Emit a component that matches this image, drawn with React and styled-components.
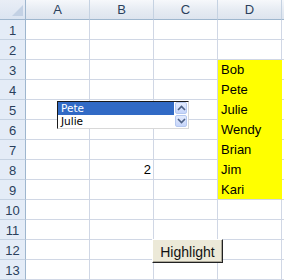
import React from 'react';
import styled, { createGlobalStyle } from 'styled-components';

const GlobalStyle = createGlobalStyle`
  html, body {
    margin: 0;
    padding: 0;
    background: #ffffff;
  }
  * {
    box-sizing: border-box;
  }
`;

const Sheet = styled.div`
  position: relative;
  width: 284px;
  height: 280px;
  overflow: hidden;
  background: #ffffff;
  font-family: "Liberation Sans", Arial, sans-serif;
`;

const Grid = styled.div`
  display: grid;
  grid-template-columns: 26px repeat(4, 64px) 1fr;
  grid-auto-rows: 20px;
`;

const Corner = styled.div`
  position: relative;
  background: linear-gradient(#e9eef6, #dbe4f1);
  border-right: 1px solid #9eb6ce;
  border-bottom: 1px solid #9eb6ce;

  &::after {
    content: '';
    position: absolute;
    right: 2px;
    bottom: 3px;
    width: 0;
    height: 0;
    border-left: 11px solid transparent;
    border-bottom: 11px solid #c3d1e4;
  }
`;

const ColHead = styled.div`
  display: flex;
  align-items: center;
  justify-content: center;
  background: linear-gradient(#f6f8fb 0%, #e7ecf3 50%, #dde4ee 100%);
  border-right: 1px solid #c5d2e2;
  border-bottom: 1px solid #9eb6ce;
  color: #2a3f5c;
  font-size: 13px;
`;

const RowHead = styled.div`
  display: flex;
  align-items: center;
  justify-content: center;
  background: #e4ecf7;
  border-right: 1px solid #9eb6ce;
  border-bottom: 1px solid #c5d2e2;
  color: #2a3f5c;
  font-size: 13px;
  padding-top: 1px;
`;

const Cell = styled.div`
  display: flex;
  align-items: flex-end;
  justify-content: ${(p) => (p.$num ? 'flex-end' : 'flex-start')};
  padding: 0 2px 2px 3px;
  background: ${(p) => (p.$fill ? '#ffff00' : '#ffffff')};
  border-right: 1px solid ${(p) => (p.$fill ? '#ffff00' : '#d0d7e5')};
  border-bottom: 1px solid ${(p) => (p.$fill && p.$fillBelow ? '#ffff00' : '#d0d7e5')};
  color: #000000;
  font-size: 13px;
  line-height: 15px;
`;

const ListBox = styled.div`
  position: absolute;
  left: 57px;
  top: 101px;
  width: 132px;
  height: 28px;
  display: flex;
  background: #ffffff;
  border-top: 1px solid #1a1a1a;
  border-left: 1px solid #1a1a1a;
  border-right: 1px solid #d8d8d8;
  border-bottom: 1px solid #d8d8d8;
`;

const Items = styled.div`
  flex: 1;
  display: flex;
  flex-direction: column;
`;

const Item = styled.div`
  height: 13px;
  padding-left: 3px;
  font-family: "DejaVu Sans", Tahoma, sans-serif;
  font-size: 10.5px;
  line-height: 13px;
  background: ${(p) => (p.$selected ? '#316ac5' : 'transparent')};
  color: ${(p) => (p.$selected ? '#ffffff' : '#000000')};
`;

const Scroll = styled.div`
  width: 14px;
  display: flex;
  flex-direction: column;
  gap: 1px;
  padding: 0 1px 0 1px;
  background: #ffffff;
`;

const ArrowBtn = styled.div`
  height: 12px;
  display: flex;
  align-items: center;
  justify-content: center;
  border: 1px solid #b5c8f0;
  border-radius: 2px;
  background: linear-gradient(#e3ebfd, #c6d5fa);
`;

const Button = styled.div`
  position: absolute;
  left: 152px;
  top: 239px;
  width: 71px;
  height: 24px;
  display: flex;
  align-items: center;
  justify-content: center;
  background: #ece9d8;
  border-top: 1px solid #ffffff;
  border-left: 1px solid #ffffff;
  border-right: 1px solid #222222;
  border-bottom: 1px solid #222222;
  box-shadow: inset -1px -1px 0 #aca899;
  font-size: 14px;
  color: #111111;
  padding-top: 1px;
`;

const Chevron = ({ up }) => (
  <svg width="9" height="6" viewBox="0 0 9 6">
    <path
      d={up ? 'M1 5 L4.5 1.5 L8 5' : 'M1 1 L4.5 4.5 L8 1'}
      fill="none"
      stroke="#4d6185"
      strokeWidth="1.6"
    />
  </svg>
);

const cols = ['A', 'B', 'C', 'D'];
const names = { 3: 'Bob', 4: 'Pete', 5: 'Julie', 6: 'Wendy', 7: 'Brian', 8: 'Jim', 9: 'Kari' };

export default function App() {
  const rows = Array.from({ length: 13 }, (_, i) => i + 1);
  return (
    <Sheet>
      <GlobalStyle />
      <Grid>
        <Corner />
        {cols.map((c) => (
          <ColHead key={c}>{c}</ColHead>
        ))}
        <ColHead />
        {rows.map((r) => (
          <React.Fragment key={r}>
            <RowHead>{r}</RowHead>
            <Cell />
            <Cell $num>{r === 8 ? '2' : ''}</Cell>
            <Cell />
            <Cell $fill={!!names[r]} $fillBelow={!!names[r + 1]}>
              {names[r] || ''}
            </Cell>
            <Cell />
          </React.Fragment>
        ))}
      </Grid>

      <ListBox>
        <Items>
          <Item $selected>Pete</Item>
          <Item>Julie</Item>
        </Items>
        <Scroll>
          <ArrowBtn>
            <Chevron up />
          </ArrowBtn>
          <ArrowBtn>
            <Chevron />
          </ArrowBtn>
        </Scroll>
      </ListBox>

      <Button>Highlight</Button>
    </Sheet>
  );
}
